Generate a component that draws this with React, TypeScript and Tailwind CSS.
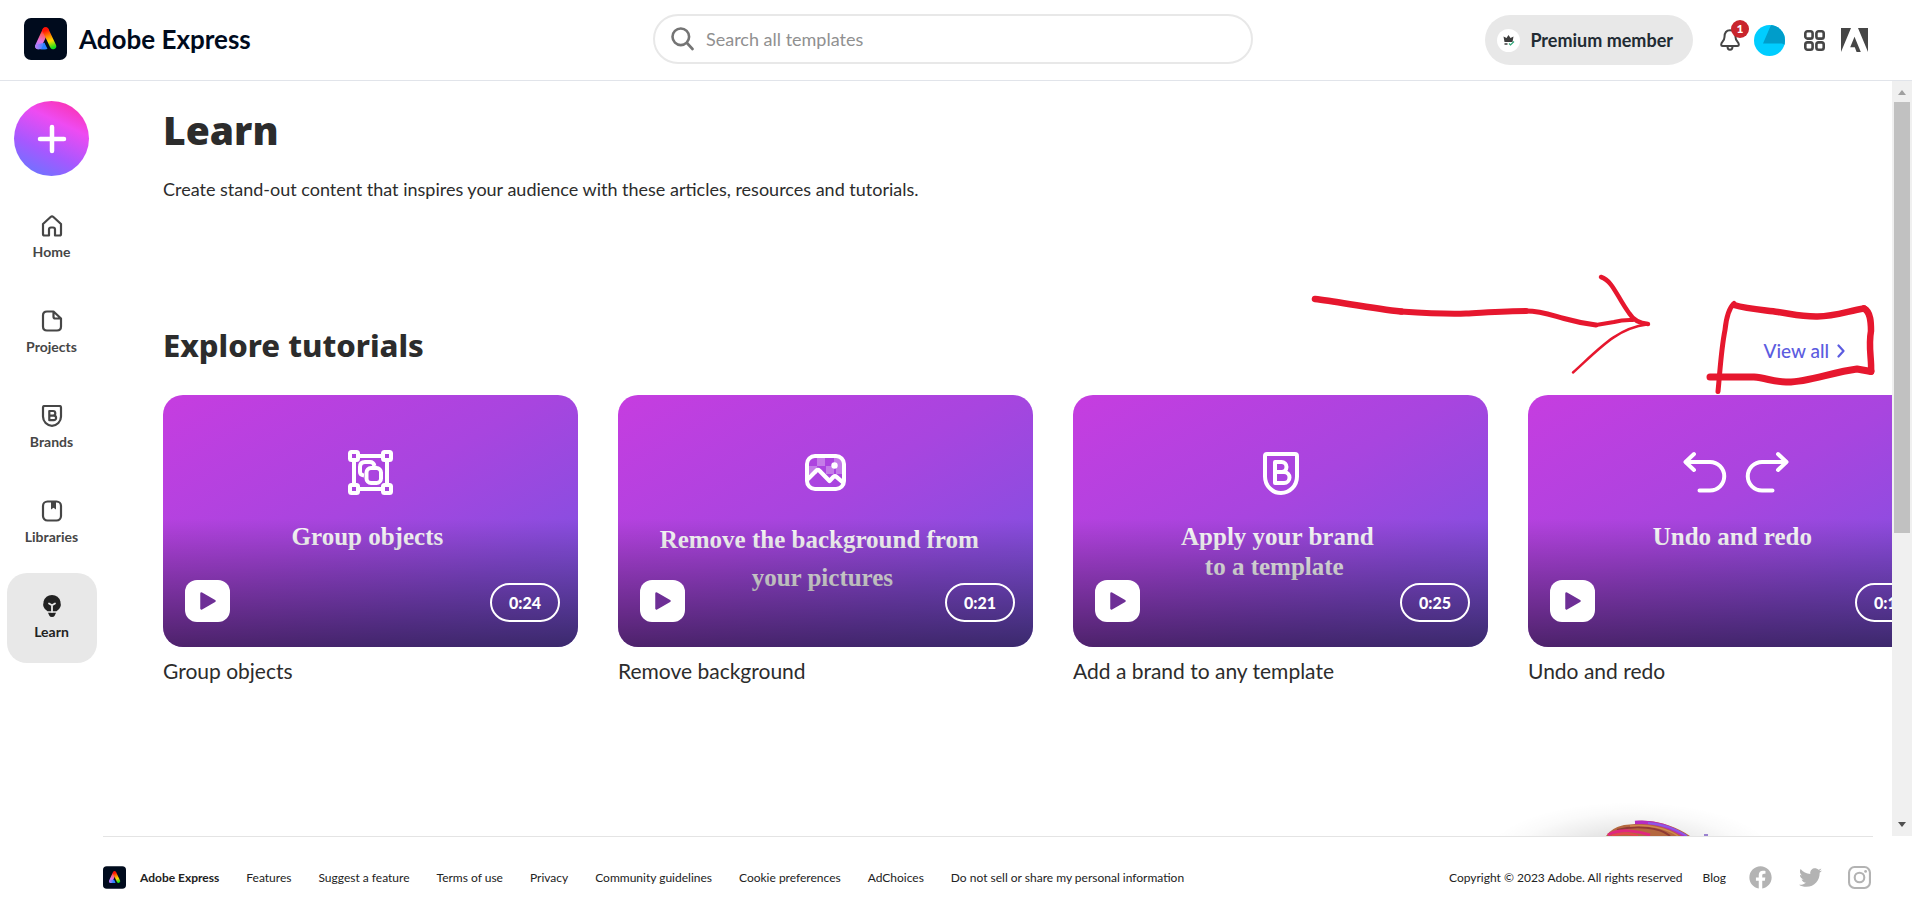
import React from "react";
import { FaFacebook, FaTwitter } from "react-icons/fa";

function AppLogo({ className, id }: { className: string; id: string }) {
  return (
    <svg viewBox="0 0 43 42" className={className} aria-hidden="true">
      <defs>
        <linearGradient id={id + "l"} gradientUnits="userSpaceOnUse" x1="21" y1="10" x2="15" y2="29">
          <stop offset="0.1" stopColor="#ff1205" />
          <stop offset="0.35" stopColor="#ff5a62" />
          <stop offset="0.7" stopColor="#e374e4" />
          <stop offset="1" stopColor="#9d7bff" />
        </linearGradient>
        <linearGradient id={id + "r"} gradientUnits="userSpaceOnUse" x1="22" y1="10" x2="29" y2="30">
          <stop offset="0.1" stopColor="#ff1205" />
          <stop offset="0.4" stopColor="#ff8a00" />
          <stop offset="0.65" stopColor="#ffdc00" />
          <stop offset="1" stopColor="#12e01c" />
        </linearGradient>
        <linearGradient id={id + "b"} gradientUnits="userSpaceOnUse" x1="12" y1="28" x2="24" y2="28">
          <stop offset="0" stopColor="#b57cf5" />
          <stop offset="0.6" stopColor="#4a86ff" />
          <stop offset="1" stopColor="#1a7cff" />
        </linearGradient>
      </defs>
      <rect width="43" height="42" rx="7" fill="#000b1d" />
      <path d="M21.5 12.5 14.3 28" stroke={"url(#" + id + "l)"} strokeWidth="6.4" strokeLinecap="round" />
      <path d="M11.6 27 16 25.8 20.3 25 21.6 29.8Q24 31.2 21 31.2H14.3Q11 31 11.2 28Z" fill={"url(#" + id + "b)"} />
      <path d="M20.3 24.4 23.3 30.4Q24 31.2 22 31.2H17Z" fill="#2b82ff" />
      <path d="M21.7 12.5 29 28" stroke={"url(#" + id + "r)"} strokeWidth="6.4" strokeLinecap="round" />
    </svg>
  );
}

const stroke = { fill: "none", stroke: "currentColor", strokeWidth: 2.2, strokeLinecap: "round", strokeLinejoin: "round" } as const;

const HomeIcon = () => (
  <svg viewBox="0 0 22 22" className="size-[22px]" {...stroke}>
    <path d="M2 9 9.6 2Q11 .9 12.4 2L20 9V19Q20 20.5 18.5 20.5H14V14.5Q14 12.5 12 12.5H10Q8 12.5 8 14.5V20.5H3.500Q2 20.500 2 19Z" />
  </svg>
);
const ProjectsIcon = () => (
  <svg viewBox="0 0 22 22" className="size-[22px]" {...stroke}>
    <path d="M6 1.500H12.500L20 8.500V16.500Q20 20.500 16 20.500H6Q2 20.500 2 16.500V5.500Q2 1.500 6 1.500ZM12.500 1.800V6.800Q12.500 8.500 14.200 8.500H19.800" />
  </svg>
);
const BrandsIcon = () => (
  <svg viewBox="0 0 22 22" className="size-[22px]" {...stroke}>
    <path d="M3.500 1H18.500Q20 1 20 2.500V11.500A9 9.300 0 0 1 2 11.500V2.500Q2 1 3.500 1Z" />
    <path d="M8.300 6H12A2.300 2.300 0 0 1 12 10.600H8.300ZM8.300 10.600H12.800A2.300 2.300 0 0 1 12.800 15.200H8.300Z" />
  </svg>
);
const LibrariesIcon = () => (
  <svg viewBox="0 0 22 22" className="size-[22px]" {...stroke}>
    <rect x="2" y="1.500" width="18" height="19" rx="4.500" />
    <path d="M10 1H15V9.500L12.500 7.800 10 9.500Z" fill="currentColor" stroke="none" />
  </svg>
);
const LearnIcon = () => (
  <svg viewBox="0 0 22 22" className="size-[22px]">
    <path d="M11 0A8.800 8.800 0 0 0 6.500 16.300H15.500A8.800 8.800 0 0 0 11 0Z" fill="currentColor" />
    <path d="M7 17.800H15L13.600 20.800Q13 22 11 22T8.400 20.800Z" fill="currentColor" />
    <path d="M8 8.400 11 10.300 14 8.400M11 10.300V16.800" stroke="#e8e8e8" strokeWidth="1.800" strokeLinecap="round" fill="none" />
  </svg>
);

const navItems = [
  { label: "Home", icon: <HomeIcon /> },
  { label: "Projects", icon: <ProjectsIcon /> },
  { label: "Brands", icon: <BrandsIcon /> },
  { label: "Libraries", icon: <LibrariesIcon /> },
  { label: "Learn", icon: <LearnIcon />, active: true },
];

const GroupArt = () => (
  <svg viewBox="0 0 45 45" className="size-[45px]" fill="none" stroke="#fff" strokeWidth="4">
    <rect x="2" y="2" width="8" height="8" rx="1.500" />
    <rect x="35" y="2" width="8" height="8" rx="1.500" />
    <rect x="2" y="35" width="8" height="8" rx="1.500" />
    <rect x="35" y="35" width="8" height="8" rx="1.500" />
    <path d="M12 6H33M12 39H33M6 12V33M39 12V33" />
    <path d="M16 25.500Q12 25 12 22V17Q12 12 17 12H22Q25.500 12 26.500 16" />
    <rect x="18.500" y="18" width="14.500" height="15" rx="4.500" />
  </svg>
);
const PictureArt = () => (
  <svg viewBox="0 0 41 45" className="h-[45px] w-[41px]" fill="none" stroke="#fff" strokeWidth="4" strokeLinecap="round" strokeLinejoin="round">
    <path d="M12 8H20V16H12ZM29 8H37V16H29ZM4 16H12V24H4ZM21 16H29V24H21ZM37 16H31V24H37Z" fill="#fff" fillOpacity="0.3" stroke="none" />
    <rect x="2" y="6" width="37" height="33" rx="8" />
    <path d="M3 29 11.500 20.500Q13 19.300 14.500 20.700L24.500 31 28.500 26.800Q30 25.500 31.500 26.800L38 32.500" strokeWidth="4.200" />
    <circle cx="29.500" cy="15.500" r="3.200" fill="#fff" stroke="none" />
  </svg>
);
const BrandArt = () => (
  <svg viewBox="0 0 38 45" className="h-[45px] w-[38px]" fill="none" stroke="#fff" strokeWidth="4" strokeLinejoin="round">
    <path d="M5 4H33Q35 4 35 6V26.500A16 16.500 0 0 1 3 26.500V6Q3 4 5 4Z" />
    <path d="M13 12H19.500A5 5 0 0 1 19.500 22H13ZM13 22H22A5.500 5.500 0 0 1 22 33H13Z" />
  </svg>
);
const UndoRedoArt = () => (
  <svg viewBox="0 0 106 45" className="h-[45px] w-[106px]" fill="none" stroke="#fff" strokeWidth="4" strokeLinecap="round" strokeLinejoin="round">
    <path d="M11 4 2.500 12 11 20M2.500 12H27A14.200 14.200 0 0 1 27 40.500H16.500" />
    <path d="M95 4 103.500 12 95 20M103.500 12H79A14.200 14.200 0 0 0 79 40.500H89.500" />
  </svg>
);

const tutorials = [
  { art: <GroupArt />, lines: ["Group objects "], time: "0:24", title: "Group objects" },
  { art: <PictureArt />, lines: ["Remove the background from  ", "your pictures "], wide: true, time: "0:21", title: "Remove background" },
  { art: <BrandArt />, lines: ["Apply your brand ", "to a template  "], time: "0:25", title: "Add a brand to any template" },
  { art: <UndoRedoArt />, lines: ["Undo and redo "], time: "0:17", title: "Undo and redo" },
];

function TutorialCard({ item }: { item: (typeof tutorials)[number] }) {
  return (
    <li className="w-[415px] shrink-0">
      <div className="relative h-[252px] overflow-hidden rounded-[20px] bg-[linear-gradient(150deg,#c63de0_0%,#a845df_45%,#8b4de0_75%,#7a56e2_100%)] pt-[55px]">
        <div className="flex justify-center">{item.art}</div>
        <p
          className={
            "text-center font-['Liberation_Serif',serif] text-[25px] font-bold whitespace-pre text-white " +
            (item.wide ? "pt-[26px] leading-[38px]" : "pt-[27px] leading-[30px]")
          }
        >
          {item.lines.map((line) => (
            <span key={line} className="block">{line}</span>
          ))}
        </p>
        <div className="absolute inset-0 flex items-end justify-between bg-[linear-gradient(180deg,transparent_49%,rgba(0,0,0,0.22)_70%,rgba(0,0,0,0.52)_100%)] pr-[18px] pb-[25px] pl-[22px]">
          <button type="button" aria-label={"Play " + item.title} className="flex h-[42px] w-[45px] items-center justify-center rounded-xl bg-white">
            <svg viewBox="0 0 16 18" className="h-[18px] w-4">
              <path d="M1.500 1.500 14.500 9 1.500 16.500Z" fill="#6e2f96" stroke="#6e2f96" strokeWidth="2.500" strokeLinejoin="round" />
            </svg>
          </button>
          <span className="flex h-[39px] items-center rounded-[20px] border-2 border-white px-[17px] text-base font-black text-white">{item.time}</span>
        </div>
      </div>
      <h3 className="mt-[9px] text-[21px] leading-[30px] text-[#2c2c2c]">{item.title}</h3>
    </li>
  );
}

const footerLinks = ["Features", "Suggest a feature", "Terms of use", "Privacy", "Community guidelines", "Cookie preferences", "AdChoices", "Do not sell or share my personal information"];

function Header() {
  return (
    <header className="grid h-[81px] shrink-0 grid-cols-[1fr_600px_1fr] items-center border-b border-[#e1e4ea] pr-[30px] pb-[2px] pl-6">
      <a href="#home" className="flex items-center gap-3">
        <AppLogo id="top" className="h-[42px] w-[43px]" />
        <span className="text-[26px] leading-9 font-bold text-[#000b1d]">Adobe Express</span>
      </a>
      <label className="flex h-[50px] items-center gap-3 rounded-full border-2 border-[#e8e8e8] pl-4">
        <svg viewBox="0 0 23 24" className="h-6 w-[23px]" fill="none" stroke="#747474" strokeWidth="2.600" strokeLinecap="round">
          <circle cx="9.800" cy="9.800" r="8.300" />
          <path d="M16 16 21.500 22" />
        </svg>
        <input type="text" aria-label="Search all templates" placeholder="Search all templates" className="min-w-0 flex-1 bg-transparent text-lg text-[#222] outline-none placeholder:text-[#909090]" />
      </label>
      <div className="flex items-center justify-end pt-[2px] pr-[14px]">
        <button type="button" className="mr-[27px] flex h-[50px] items-center gap-[10px] rounded-full bg-[#e8e8e8] pr-5 pl-3 text-lg font-bold text-[#222b33]">
          <svg viewBox="0 0 23 23" className="size-[23px]">
            <circle cx="11.500" cy="11.500" r="11.500" fill="#fff" />
            <path d="M6.500 7.500 9.500 9 11.500 6 13.500 9 16.500 7.500 15.500 13H7.500Z" fill="#3c3c3c" />
            <path d="M7.500 15H10.500" stroke="#3c3c3c" strokeWidth="1.500" />
            <path d="M12 14.500 13.500 16 17 12.500" stroke="#2fa87a" strokeWidth="1.200" fill="none" />
          </svg>
          Premium member
        </button>
        <button type="button" aria-label="Notifications, 1 new" className="relative mr-[14px] text-[#464646]">
          <svg viewBox="0 0 20 22" className="h-[22px] w-5" fill="none" stroke="currentColor" strokeWidth="2" strokeLinecap="round" strokeLinejoin="round">
            <path d="M10 1.200C6 1.200 4.500 4.500 4.500 8 4.500 12 1.200 13 1.200 15.500Q1.200 17 2.700 17H17.300Q18.800 17 18.800 15.500C18.800 13 15.500 12 15.500 8 15.500 4.500 14 1.200 10 1.200ZM7.500 17.500C7.500 21.800 12.500 21.800 12.500 17.500" />
          </svg>
          <span className="absolute -top-[9px] left-[11px] flex size-[18px] items-center justify-center rounded-full bg-[#c9252d] text-xs font-black text-white">1</span>
        </button>
        <button type="button" aria-label="Account" className="mr-[19px]">
          <svg viewBox="0 0 31 31" className="size-[31px]">
            <clipPath id="avatar"><circle cx="15.500" cy="15.500" r="15.500" /></clipPath>
            <g clipPath="url(#avatar)">
              <path d="M0 0H31V31H0Z" fill="#00cdff" />
              <path d="M17 0H31V20L28 18.500H9Z" fill="#009dca" />
            </g>
          </svg>
        </button>
        <button type="button" aria-label="Apps" className="mr-4">
          <svg viewBox="0 0 21 21" className="size-[21px]" fill="none" stroke="#464646" strokeWidth="2.600">
            <rect x="1.300" y="1.300" width="7.300" height="7.300" rx="2.200" />
            <rect x="12.400" y="1.300" width="7.300" height="7.300" rx="2.200" />
            <rect x="1.300" y="12.400" width="7.300" height="7.300" rx="2.200" />
            <rect x="12.400" y="12.400" width="7.300" height="7.300" rx="2.200" />
          </svg>
        </button>
        <a href="#adobe" aria-label="Adobe">
          <svg viewBox="0 0 27 24" className="h-6 w-[27px]" fill="#464646">
            <path d="M0 0H10L0 24ZM17 0H27V24ZM13.500 8.800 19.800 24H15.600L13.800 19.200H9.200Z" />
          </svg>
        </a>
      </div>
    </header>
  );
}

function Sidebar() {
  return (
    <nav aria-label="Main" className="flex w-[103px] shrink-0 flex-col items-center gap-[5px] pt-5">
      <button type="button" aria-label="Create" className="mb-3 flex size-[75px] items-center justify-center rounded-full bg-[linear-gradient(25deg,#5c7cff_0%,#a658ff_36%,#ee4bf2_68%,#ff2a9c_100%)]">
        <svg viewBox="0 0 30 30" className="size-[30px]" stroke="#fff" strokeWidth="4.500" strokeLinecap="round">
          <path d="M15 3V27M3 15H27" />
        </svg>
      </button>
      {navItems.map((item) => (
        <a
          key={item.label}
          href={"#" + item.label.toLowerCase()}
          className={
            "flex size-[90px] flex-col items-center gap-[6px] rounded-[20px] pt-[22px] text-sm leading-[18px] font-bold " +
            (item.active ? "bg-[#e8e8e8] text-[#222]" : "text-[#464646]")
          }
        >
          {item.icon}
          {item.label}
        </a>
      ))}
    </nav>
  );
}

function Annotation() {
  return (
    <svg viewBox="1300 260 592 140" className="pointer-events-none absolute top-[179px] right-1 h-[140px] w-[592px]" fill="none" stroke="#e6172e" strokeLinecap="round" strokeLinejoin="round">
      <path d="M1319 299C1340 301.500 1375 308 1405 311.500" strokeWidth="6.600" />
      <path d="M1405 311.500S1450 314.500 1470 313.500C1490 312.500 1510 311 1530 311" strokeWidth="6" />
      <path d="M1530 311C1545 311 1555 315 1568 318.500Q1584 323 1600 325" strokeWidth="5" />
      <path d="M1600 325 1618 322Q1627 319.500 1637 320" strokeWidth="4" />
      <path d="M1605 277C1617 281 1621 297 1633 313Q1639 323 1652 324" strokeWidth="4.500" />
      <path d="M1651 324.500C1621 328 1603 349 1577 372.500" strokeWidth="2.500" />
      <path d="M1722 391.500C1724 372 1725 350 1729 330Q1731 310 1738 303.500" strokeWidth="5" />
      <path d="M1738 305C1752 309 1768 310 1782 312 1796 314 1804 316.500 1820 316.500 1838 317 1852 311 1868 308.500" strokeWidth="6.500" />
      <path d="M1868 308.500C1875 312 1875 323 1875 331 1872 347 1876 360 1875 371.500" strokeWidth="6.500" />
      <path d="M1875 371.500 1861 369C1836 372 1810 383 1790 382 1778 382 1770 378 1758 377H1714" strokeWidth="7" />
    </svg>
  );
}

function Scrollbar() {
  return (
    <div aria-hidden="true" className="flex w-5 shrink-0 flex-col items-center bg-[#f0f0f0]">
      <svg viewBox="0 0 20 21" className="h-[21px] w-5 shrink-0"><path d="M6 14 10 9 14 14Z" fill="#a0a0a0" /></svg>
      <div className="h-[431px] w-4 bg-[#c1c1c1]" />
      <svg viewBox="0 0 20 21" className="mt-auto h-[21px] w-5 shrink-0"><path d="M6 7 10 12 14 7Z" fill="#505050" /></svg>
    </div>
  );
}

function HeroPeek() {
  return (
    <svg viewBox="0 0 300 46" className="absolute right-[112px] bottom-0 h-[46px] w-[300px]" aria-hidden="true">
      <defs>
        <radialGradient id="halo" gradientUnits="userSpaceOnUse" cx="0" cy="0" r="1" gradientTransform="translate(150 66) scale(145 54)">
          <stop offset="0" stopColor="#000" stopOpacity="0.2" />
          <stop offset="0.55" stopColor="#000" stopOpacity="0.07" />
          <stop offset="0.8" stopColor="#000" stopOpacity="0.02" />
          <stop offset="1" stopColor="#000" stopOpacity="0" />
        </radialGradient>
      </defs>
      <rect width="300" height="46" fill="url(#halo)" />
      <path d="M126 46Q131 38 144 35L155 34V31C178 29 197 37 210 46Z" fill="#b5683f" />
      <path d="M155 32.500C176 30.500 193 38 205 46" fill="none" stroke="#b52cc0" strokeWidth="3.500" />
      <path d="M168 33C185 34 197 40 207 46" fill="none" stroke="#8a5ae6" strokeWidth="2" />
      <path d="M137 40C155 35 180 37 190 46" fill="none" stroke="#8f3a35" strokeWidth="2" />
      <path d="M150 36C170 34 188 39 198 46" fill="none" stroke="#d18a4e" strokeWidth="1.500" />
      <path d="M128 45C140 38 158 41 170 45" fill="none" stroke="#e0287d" strokeWidth="3" />
      <path d="M132 46Q144 41 158 46" fill="none" stroke="#e8444e" strokeWidth="2" />
      <path d="M224 45H228" stroke="#7d5cc4" strokeWidth="1.500" />
    </svg>
  );
}

function Footer() {
  return (
    <footer className="mr-[39px] flex h-[71px] shrink-0 items-center justify-between border-t border-[#e4e4e4] pt-[11px] text-xs text-[#222]">
      <div className="flex items-center gap-[27px] whitespace-nowrap">
        <a href="#home" className="flex items-center gap-[14px] font-bold">
          <AppLogo id="foot" className="size-[23px]" />
          Adobe Express
        </a>
        {footerLinks.map((link) => (
          <a key={link} href="#legal">{link}</a>
        ))}
      </div>
      <div className="flex items-center whitespace-nowrap">
        <span>Copyright © 2023 Adobe. All rights reserved</span>
        <a href="#blog" className="ml-5">Blog</a>
        <a href="#facebook" aria-label="Facebook" className="ml-[23px] text-[#b3b3b3]"><FaFacebook className="size-[23px]" /></a>
        <a href="#twitter" aria-label="Twitter" className="ml-[27px] text-[#b3b3b3]"><FaTwitter className="size-[23px]" /></a>
        <a href="#instagram" aria-label="Instagram" className="mr-[2px] ml-[26px] text-[#b3b3b3]">
          <svg viewBox="0 0 23 23" className="size-[23px]" fill="none" stroke="currentColor" strokeWidth="2.100">
            <rect x="1.050" y="1.050" width="20.900" height="20.900" rx="5.500" />
            <circle cx="11.500" cy="11.500" r="4.800" />
            <circle cx="17.600" cy="5.400" r="1.400" fill="currentColor" stroke="none" />
          </svg>
        </a>
      </div>
    </footer>
  );
}

export default function App() {
  return (
    <div className="flex h-screen flex-col overflow-hidden bg-white font-['Lato','Noto_Sans',sans-serif] text-[#2c2c2c]">
      <Header />
      <div className="flex min-h-0 flex-1">
        <Sidebar />
        <div className="flex min-w-0 flex-1 flex-col">
          <div className="flex min-h-0 flex-1">
            <main className="relative min-w-0 flex-1 overflow-hidden pt-6 pl-[60px]">
              <h1 className="font-['Noto_Sans','Lato',sans-serif] text-[39px] leading-[50px] font-black">Learn</h1>
              <p className="mt-5 text-lg leading-7">Create stand-out content that inspires your audience with these articles, resources and tutorials.</p>
              <section className="mt-[122px]">
                <div className="flex h-[70px] items-start justify-between pr-[47px]">
                  <h2 className="font-['Noto_Sans','Lato',sans-serif] text-[31px] leading-10 font-extrabold">Explore tutorials</h2>
                  <a href="#tutorials" className="flex items-center gap-2 pt-3 text-[19px] leading-7 font-medium text-[#5c5ce0]">
                    View all
                    <svg viewBox="0 0 8 14" className="h-[14px] w-2" fill="none" stroke="currentColor" strokeWidth="2.200" strokeLinecap="round" strokeLinejoin="round">
                      <path d="M1.500 1.500 6.500 7 1.500 12.500" />
                    </svg>
                  </a>
                </div>
                <ul className="flex gap-10">
                  {tutorials.map((item) => (
                    <TutorialCard key={item.title} item={item} />
                  ))}
                </ul>
              </section>
              <HeroPeek />
              <Annotation />
            </main>
            <Scrollbar />
          </div>
          <Footer />
        </div>
      </div>
    </div>
  );
}
